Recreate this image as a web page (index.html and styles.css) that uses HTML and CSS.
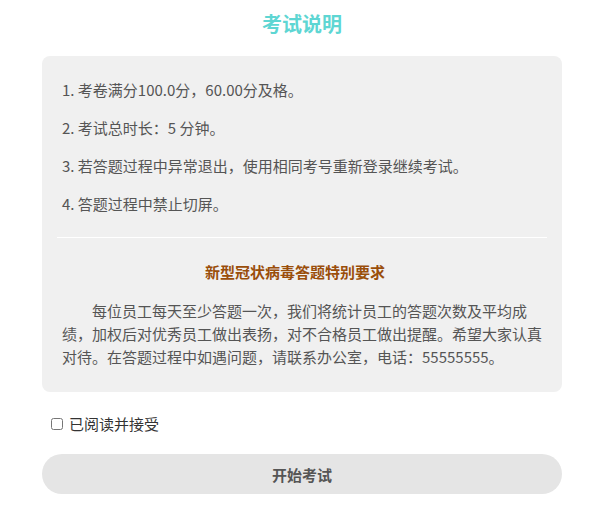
FILE: index.html
```html
<!DOCTYPE html>
<html lang="zh-CN">
<head>
<meta charset="utf-8">
<title>考试说明</title>
<link rel="stylesheet" href="styles.css">
</head>
<body>
<div class="page">
  <h1 class="title">考试说明</h1>
  <div class="card">
    <ul class="rules">
      <li>1. 考卷满分100.0分，60.00分及格。</li>
      <li>2. 考试总时长：5 分钟。</li>
      <li>3. 若答题过程中异常退出，使用相同考号重新登录继续考试。</li>
      <li>4. 答题过程中禁止切屏。</li>
    </ul>
    <div class="divider"></div>
    <h2 class="notice-title">新型冠状病毒答题特别要求</h2>
    <p class="notice">每位员工每天至少答题一次，我们将统计员工的答题次数及平均成绩，加权后对优秀员工做出表扬，对不合格员工做出提醒。希望大家认真对待。在答题过程中如遇问题，请联系办公室，电话：55555555。</p>
  </div>
  <label class="agree"><input type="checkbox" class="agree-box"><span>已阅读并接受</span></label>
  <button class="start" type="button">开始考试</button>
</div>
</body>
</html>
```
FILE: styles.css
```css
html, body {
  margin: 0;
  padding: 0;
  background: #ffffff;
}
body {
  font-family: "Microsoft YaHei", "Noto Sans CJK SC", "Noto Sans", sans-serif;
  font-size: 15px;
  color: #555555;
}
.page {
  padding: 0 38px 0 42px;
}
.title {
  margin: 10px 0 18px;
  font-size: 20px;
  line-height: 28px;
  font-weight: bold;
  text-align: center;
  color: #5ed6d3;
}
.card {
  background: #f0f0f0;
  border-radius: 8px;
  padding: 15px 15px 16px;
}
.rules {
  list-style: none;
  margin: 0;
  padding: 8px 5px 6px;
}
.rules li {
  line-height: 22px;
  margin: 0 0 16px;
}
.divider {
  height: 1px;
  background: #ffffff;
}
.notice-title {
  margin: 23px 0 16px;
  padding-right: 14px;
  font-size: 15px;
  line-height: 22px;
  font-weight: bold;
  text-align: center;
  color: #9a4e0a;
}
.notice {
  margin: 0 0 8px;
  padding: 0 5px;
  line-height: 23px;
  text-indent: 2em;
}
.agree {
  display: flex;
  align-items: center;
  margin-top: 21px;
  line-height: 22px;
  color: #333333;
}
.agree-box {
  width: 12px;
  height: 12px;
  margin: 0 6px 0 9px;
}
.start {
  display: block;
  width: 100%;
  height: 40px;
  margin-top: 19px;
  border: none;
  border-radius: 20px;
  background: #e5e5e5;
  color: #555555;
  font-family: inherit;
  font-size: 15px;
  font-weight: bold;
}
```
